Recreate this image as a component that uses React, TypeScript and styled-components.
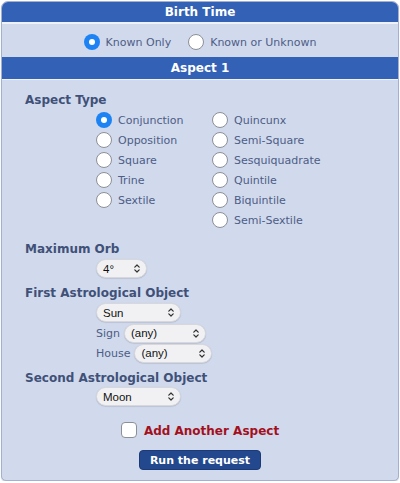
import React from "react";
import styled, { createGlobalStyle } from "styled-components";

const GlobalStyle = createGlobalStyle`
  html, body {
    margin: 0;
    padding: 0;
    background: #ffffff;
  }
  body {
    font-family: "DejaVu Sans", Verdana, sans-serif;
  }
  * { box-sizing: border-box; }
`;

const Panel = styled.form`
  width: 398px;
  height: 480px;
  margin: 1px 0 0 1px;
  border: 1px solid #a3b1cf;
  border-radius: 7px 7px 5px 5px;
  background: #d1d9ec;
  overflow: hidden;
  box-shadow: 0 1px 1px rgba(60, 70, 100, 0.25);
  display: flex;
  flex-direction: column;
`;

const SectionHeader = styled.div<{ $h: number; $line: number }>`
  flex: none;
  height: ${(p) => p.$h + p.$line}px;
  background: #3261b5;
  color: #ffffff;
  font-weight: bold;
  font-size: 12px;
  line-height: ${(p) => p.$h + 1}px;
  text-align: center;
  border-bottom: ${(p) => p.$line}px solid #eef1f8;
`;

const TimeRow = styled.div`
  flex: none;
  height: 33px;
  display: flex;
  align-items: center;
  justify-content: center;
  gap: 17px;
  padding-top: 3px;
`;

const Choice = styled.label`
  display: flex;
  align-items: center;
  gap: 6px;
  height: 20px;
  font-size: 11px;
  color: #4d5d86;
  white-space: nowrap;
`;

const Radio = styled.input.attrs({ type: "radio" })`
  appearance: none;
  margin: 0;
  width: 16px;
  height: 16px;
  border-radius: 50%;
  border: 1px solid #8d8f96;
  background: #ffffff;
  flex: none;
  display: grid;
  place-items: center;
  &:checked {
    border: none;
    background: #1d83f5;
  }
  &:checked::after {
    content: "";
    width: 6px;
    height: 6px;
    border-radius: 50%;
    background: #ffffff;
  }
`;

const Body = styled.div`
  display: flex;
  flex-direction: column;
  padding: 10px 0 0 23px;
`;

const FieldLabel = styled.div<{ $top: number }>`
  margin-top: ${(p) => p.$top}px;
  font-size: 12px;
  font-weight: bold;
  line-height: 20px;
  color: #3f5178;
`;

const Indent = styled.div<{ $top: number }>`
  margin: ${(p) => p.$top}px 0 0 71px;
  display: flex;
  flex-direction: column;
  gap: 1px;
  align-items: flex-start;
`;

const AspectGrid = styled.div`
  display: grid;
  grid-template-columns: 116px auto;
  align-items: start;
`;

const Column = styled.div`
  display: flex;
  flex-direction: column;
`;

const InlineRow = styled.div`
  display: flex;
  align-items: center;
  gap: 4px;
  font-size: 11px;
  color: #4d5d86;
  height: 19px;
  padding-top: 1px;
`;

const SelectWrap = styled.span<{ $w: number }>`
  position: relative;
  display: inline-block;
  flex: none;
  width: ${(p) => p.$w}px;
  height: 19px;
`;

const Select = styled.select`
  appearance: none;
  display: block;
  width: 100%;
  height: 19px;
  margin: 0;
  padding: 0 16px 0 6px;
  border: 1px solid #d6d8de;
  border-radius: 10px;
  background: #f1f1f3;
  box-shadow: 0 0.5px 1px rgba(0, 0, 0, 0.18);
  font-family: "Liberation Sans", Arial, sans-serif;
  font-size: 11.5px;
  color: #111111;
  outline: none;
`;

const Chevron = styled.svg`
  position: absolute;
  right: 7px;
  top: 5px;
  width: 6px;
  height: 9px;
  pointer-events: none;
`;

const Footer = styled.div`
  display: flex;
  flex-direction: column;
  align-items: center;
  padding-right: 23px;
`;

const AddRow = styled.label`
  margin-top: 15px;
  display: flex;
  align-items: center;
  gap: 7px;
  height: 18px;
  font-size: 12px;
  font-weight: bold;
  color: #a3101d;
`;

const AddText = styled.span`
  padding-top: 2px;
`;

const Check = styled.input.attrs({ type: "checkbox" })`
  appearance: none;
  margin: 0;
  width: 16px;
  height: 16px;
  border: 1px solid #8d8f96;
  border-radius: 4px;
  background: #ffffff;
`;

const RunButton = styled.button`
  margin-top: 11px;
  width: 122px;
  height: 20px;
  padding: 1px 0 0;
  border: 1px solid #1c3a75;
  border-radius: 4px;
  background: #24488d;
  color: #ffffff;
  font-family: "DejaVu Sans", Verdana, sans-serif;
  font-size: 11px;
  font-weight: bold;
  line-height: 17px;
`;

const UpDown = () => (
  <Chevron viewBox="0 0 6 9">
    <path
      d="M0.8 3.2 L3 1 L5.2 3.2 M0.8 5.8 L3 8 L5.2 5.8"
      fill="none"
      stroke="#333"
      strokeWidth="1.2"
      strokeLinecap="round"
      strokeLinejoin="round"
    />
  </Chevron>
);

type PickProps = { w: number; value: string; options: string[] };

const Pick = ({ w, value, options }: PickProps) => (
  <SelectWrap $w={w}>
    <Select defaultValue={value}>
      {options.map((o) => (
        <option key={o}>{o}</option>
      ))}
    </Select>
    <UpDown />
  </SelectWrap>
);

const leftAspects = ["Conjunction", "Opposition", "Square", "Trine", "Sextile"];
const rightAspects = [
  "Quincunx",
  "Semi-Square",
  "Sesquiquadrate",
  "Quintile",
  "Biquintile",
  "Semi-Sextile",
];
const objects = ["Sun", "Moon", "Mercury", "Venus", "Mars", "Jupiter", "Saturn"];
const signs = ["(any)", "Aries", "Taurus", "Gemini", "Cancer", "Leo", "Virgo"];
const houses = ["(any)", "1st", "2nd", "3rd", "4th", "5th", "6th"];
const orbs = ["1°", "2°", "3°", "4°", "5°", "6°"];

export default function App() {
  return (
    <>
      <GlobalStyle />
      <Panel onSubmit={(e) => e.preventDefault()}>
        <SectionHeader $h={20} $line={2}>Birth Time</SectionHeader>
        <TimeRow>
          <Choice>
            <Radio name="time" defaultChecked />
            Known Only
          </Choice>
          <Choice>
            <Radio name="time" />
            Known or Unknown
          </Choice>
        </TimeRow>
        <SectionHeader $h={22} $line={1}>Aspect 1</SectionHeader>
        <Body>
          <FieldLabel $top={0}>Aspect Type</FieldLabel>
          <Indent $top={0}>
            <AspectGrid>
              <Column>
                {leftAspects.map((a, i) => (
                  <Choice key={a}>
                    <Radio name="aspect" defaultChecked={i === 0} />
                    {a}
                  </Choice>
                ))}
              </Column>
              <Column>
                {rightAspects.map((a) => (
                  <Choice key={a}>
                    <Radio name="aspect" />
                    {a}
                  </Choice>
                ))}
              </Column>
            </AspectGrid>
          </Indent>

          <FieldLabel $top={9}>Maximum Orb</FieldLabel>
          <Indent $top={0}>
            <Pick w={51} value="4°" options={orbs} />
          </Indent>

          <FieldLabel $top={5}>First Astrological Object</FieldLabel>
          <Indent $top={0}>
            <Pick w={85} value="Sun" options={objects} />
            <InlineRow>
              Sign
              <Pick w={82} value="(any)" options={signs} />
            </InlineRow>
            <InlineRow>
              House
              <Pick w={78} value="(any)" options={houses} />
            </InlineRow>
          </Indent>

          <FieldLabel $top={6}>Second Astrological Object</FieldLabel>
          <Indent $top={-1}>
            <Pick w={85} value="Moon" options={objects} />
          </Indent>

          <Footer>
            <AddRow>
              <Check />
              <AddText>Add Another Aspect</AddText>
            </AddRow>
            <RunButton type="submit">Run the request</RunButton>
          </Footer>
        </Body>
      </Panel>
    </>
  );
}
